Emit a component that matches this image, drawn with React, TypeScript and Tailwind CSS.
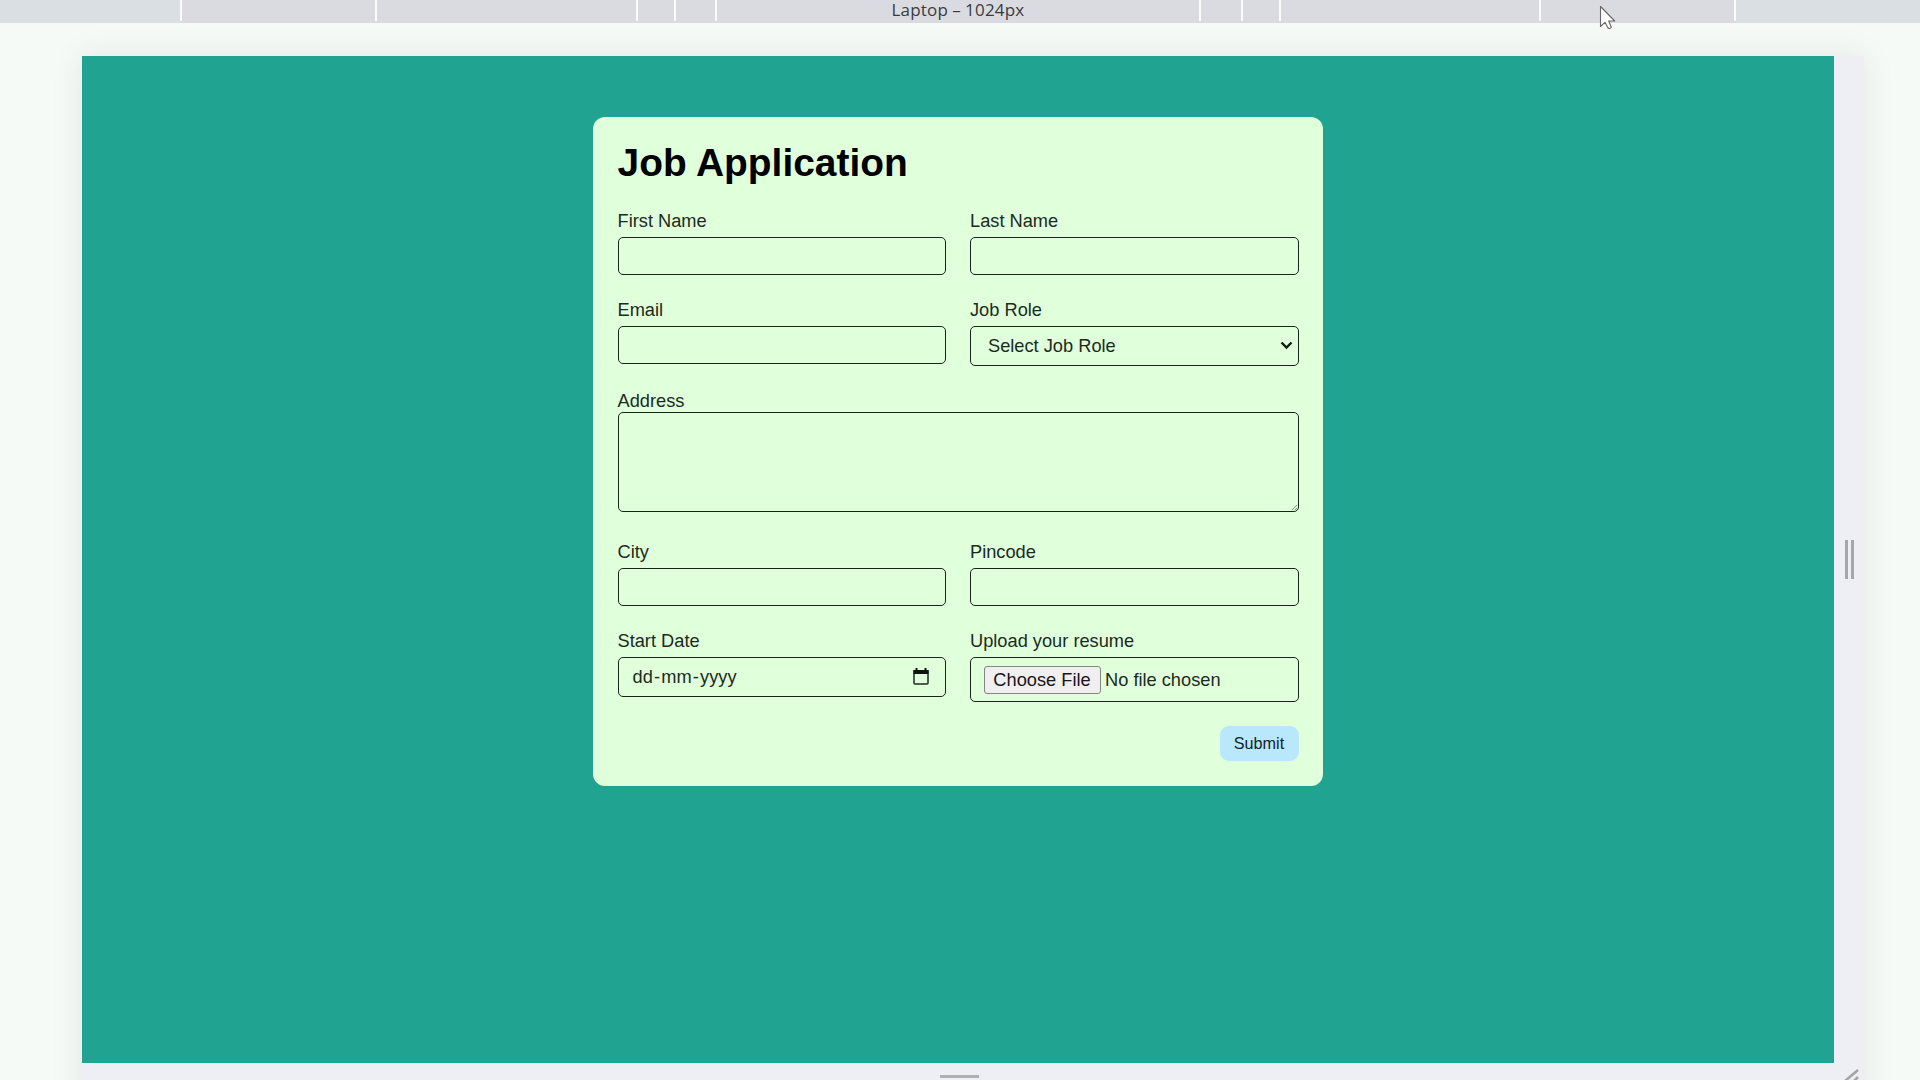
import React from 'react';

function Tick() {
  return <div className="h-[21px] w-[2px] shrink-0 bg-[#fbfbfc]" />;
}

function MediaBar() {
  return (
    <header className="relative z-10 flex h-[23px] w-full shrink-0 bg-[#dadbe0] font-['Open_Sans','Noto_Sans',sans-serif] text-[#3a3b3f]">
      <div className="w-[180px] bg-[#dadfe4]" />
      <Tick />
      <div className="w-[193px]" />
      <Tick />
      <div className="w-[259px]" />
      <Tick />
      <div className="w-[36px]" />
      <Tick />
      <div className="w-[39px]" />
      <Tick />
      <div className="flex w-[482px] justify-center text-[17px] leading-[19px] tracking-[0.2px] [word-spacing:-0.5px]">
        <span className="whitespace-nowrap">Laptop – 1024px</span>
      </div>
      <Tick />
      <div className="w-[40px]" />
      <Tick />
      <div className="w-[36px]" />
      <Tick />
      <div className="w-[258px]" />
      <Tick />
      <div className="w-[193px]" />
      <Tick />
      <div className="flex-1 bg-[#dadfe4]" />
    </header>
  );
}

function Cursor() {
  return (
    <svg className="absolute left-[1599px] top-[5px] z-20" width="18" height="26" viewBox="0 0 18 26">
      <path
        d="M1.5 1.5V21.5L6 17.3L9 23Q10.5 24.3 12.3 22.3L9.7 16H15.7Z"
        fill="#fff"
        stroke="#66666a"
        strokeWidth="1.1"
        strokeLinejoin="round"
      />
    </svg>
  );
}

const box = 'w-full rounded-[5px] border border-[#16241a] bg-transparent';

function Field({ label, children }: { label: string; children: React.ReactNode }) {
  return (
    <label className="flex flex-col">
      <span className="h-[26px] leading-[19px]">{label}</span>
      {children}
    </label>
  );
}

function JobForm() {
  return (
    <form className="mt-[61px] h-[668.5px] w-[730px] rounded-[12px] bg-[#e0ffdb] px-[24.5px] pt-[24px] font-['Liberation_Sans',Arial,sans-serif] text-[18.24px] text-[#1c2a1e]">
      <h1 className="h-[70px] text-[38.9px] font-bold leading-[44px] text-black">Job Application</h1>
      <div className="grid grid-cols-2 gap-x-[24px]">
        <div className="h-[89px]">
          <Field label="First Name">
            <input className={`${box} h-[38px] px-3`} />
          </Field>
        </div>
        <div className="h-[89px]">
          <Field label="Last Name">
            <input className={`${box} h-[38px] px-3`} />
          </Field>
        </div>
        <div className="h-[91px]">
          <Field label="Email">
            <input className={`${box} h-[38px] px-3`} />
          </Field>
        </div>
        <div className="h-[91px]">
          <Field label="Job Role">
            <div className={`${box} flex h-[40px] items-center justify-between pl-[17px] pr-[5px]`}>
              <span>Select Job Role</span>
              <svg width="13" height="9" viewBox="0 0 13 9" className="-mt-[1px]">
                <path d="M1.5 1.5L6.5 6.5L11.5 1.5" fill="none" stroke="#111a12" strokeWidth="2.4" />
              </svg>
            </div>
          </Field>
        </div>
        <div className="relative col-span-2 h-[151px]">
          <div className="h-[21px] leading-[19px]">Address</div>
          <textarea className={`${box} block h-[100px] resize-none`} />
          <svg className="absolute left-[673px] top-[113px]" width="7" height="7" viewBox="0 0 8 8">
            <path d="M1 7L7 1M4.5 7L7 4.5" stroke="#6f8570" strokeWidth="1" />
          </svg>
        </div>
        <div className="h-[89px]">
          <Field label="City">
            <input className={`${box} h-[38px] px-3`} />
          </Field>
        </div>
        <div className="h-[89px]">
          <Field label="Pincode">
            <input className={`${box} h-[38px] px-3`} />
          </Field>
        </div>
        <div className="h-[95px]">
          <Field label="Start Date">
            <div className={`${box} flex h-[40px] items-center justify-between pl-[14px] pr-[16px]`}>
              <div className="flex items-center">
                <span>dd</span>
                <span className="mx-[1.2px]">-</span>
                <span>mm</span>
                <span className="mx-[1.2px]">-</span>
                <span>yyyy</span>
              </div>
              <svg width="16" height="17" viewBox="0 0 16 17" className="-mt-[1px]">
                <path d="M1 3H15V15Q15 16 14 16H2Q1 16 1 15Z" fill="none" stroke="#1c2a1e" strokeWidth="1.5" />
                <path d="M0.5 2H15.5V6H0.5ZM2.5 0H4.5V3H2.5ZM11.5 0H13.5V3H11.5Z" fill="#0c150d" />
              </svg>
            </div>
          </Field>
        </div>
        <div className="h-[95px]">
          <Field label="Upload your resume">
            <div className={`${box} flex h-[45px] items-center pl-[12.5px]`}>
              <button
                type="button"
                className="h-[28px] w-[117px] rounded-[3px] border border-[#858585] bg-[#efefef] leading-[26px] text-[#1b1418]"
              >
                Choose File
              </button>
              <span className="ml-[4.5px]">No file chosen</span>
            </div>
          </Field>
        </div>
      </div>
      <div className="flex justify-end">
        <button type="button" className="h-[35px] w-[79px] rounded-[9px] bg-[#b9e7fb] text-[16.2px] text-[#14222b]">
          Submit
        </button>
      </div>
    </form>
  );
}

export default function App() {
  return (
    <div className="relative flex h-[1080px] w-[1920px] flex-col overflow-hidden bg-[#f6faf7]">
      <MediaBar />
      <Cursor />
      <div className="ml-[82px] mt-[33px] h-[1060px] w-[1782px] shrink-0 bg-[#eeeff4] shadow-[0_0_32px_rgba(0,0,0,0.08)]">
        <div className="flex h-[1007px]">
          <main className="flex w-[1752px] shrink-0 justify-center bg-[#21a391]">
            <JobForm />
          </main>
          <div className="flex flex-1 justify-center gap-[3px] pt-[484px]">
            <div className="h-[39px] w-[3px] bg-[#a6a6a8]" />
            <div className="h-[39px] w-[3px] bg-[#a6a6a8]" />
          </div>
        </div>
        <div className="flex h-[17px] items-end justify-between">
          <div className="mb-[2px] ml-[858px] h-[3px] w-[39px] bg-[#b0b0b2]" />
          <svg width="17" height="12" viewBox="0 0 17 12" className="mr-[3px]">
            <path d="M1 13L14 2M10 13L14 9" stroke="#a4a4a6" strokeWidth="2.6" />
          </svg>
        </div>
      </div>
    </div>
  );
}
